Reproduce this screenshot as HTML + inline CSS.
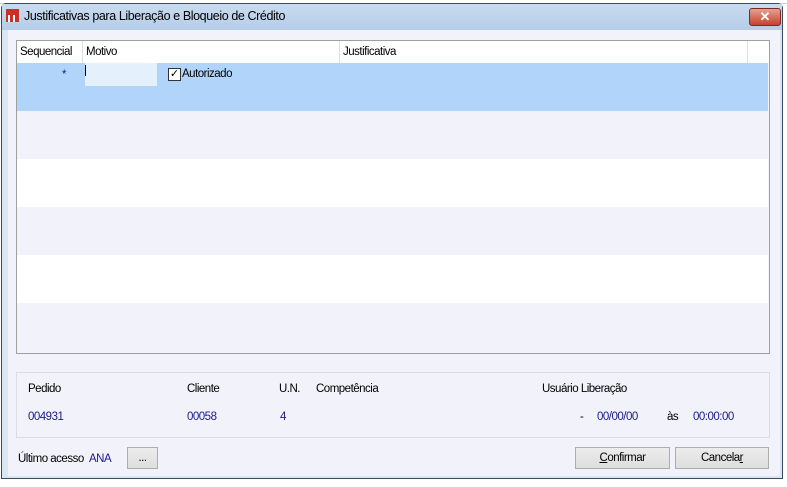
<!DOCTYPE html>
<html><head><style>
*{margin:0;padding:0;box-sizing:border-box}
body{width:787px;height:487px;overflow:hidden;background:#fff;font-family:"Liberation Sans",sans-serif;font-size:12px;color:#000;position:relative}
.abs{position:absolute}
#win{left:1px;top:3px;width:782px;height:476px;border:1px solid #3a4a5e;border-radius:5px 5px 0 0;background:#dbe6f4}
#title{left:2px;top:4px;width:780px;height:26px;background:linear-gradient(#c9dcf0,#b5cde8)}
#body{left:8px;top:30px;width:772px;height:446px;background:#f2f2fa}
.t{position:absolute;white-space:nowrap;font-size:11.5px;letter-spacing:-0.5px}
.b{color:#1a1a8c}
.btn{position:absolute;border:1px solid #adadad;background:linear-gradient(#ececec,#dedede);text-align:center;line-height:20px;font-size:11.5px;letter-spacing:-0.5px}
</style></head><body>
<div class="abs" style="left:0;top:0;width:787px;height:4px;background:#fff;border-bottom:1px solid #ccc"></div>
<div class="abs" id="win"></div>
<div class="abs" id="title"></div>
<div class="abs" style="left:6px;top:9px;width:13px;height:13px;background:#c8302a"></div>
<div class="abs" style="left:8px;top:15px;width:2px;height:7px;background:#fff"></div>
<div class="abs" style="left:13px;top:15px;width:2px;height:7px;background:#fff"></div>
<div class="t" style="left:24px;top:9px;font-size:12.5px;letter-spacing:-0.4px">Justificativas para Liberação e Bloqueio de Crédito</div>
<div class="abs" style="left:749px;top:8px;width:32px;height:18px;border:1px solid #7a2a20;border-radius:3px;background:linear-gradient(#e6a090,#c4432c);color:#fff;text-align:center;font-weight:bold;font-size:13px;line-height:16px">✕</div>
<div class="abs" id="body"></div>
<div class="abs" style="left:16px;top:40px;width:754px;height:314px;border:1px solid #a0a0a0;background:#f2f2fa"></div>
<div class="abs" style="left:17px;top:41px;width:752px;height:22px;background:#fff"></div>
<div class="abs" style="left:82px;top:41px;width:1px;height:22px;background:#e0e0e0"></div>
<div class="abs" style="left:339px;top:41px;width:1px;height:22px;background:#e0e0e0"></div>
<div class="abs" style="left:747px;top:41px;width:1px;height:22px;background:#e0e0e0"></div>
<div class="t" style="left:20px;top:46px">Sequencial</div>
<div class="t" style="left:86px;top:46px">Motivo</div>
<div class="t" style="left:343px;top:46px">Justificativa</div>
<div class="abs" style="left:17px;top:63px;width:751px;height:48px;background:#b1d5fa"></div>
<div class="abs" style="left:85px;top:63px;width:72px;height:23px;background:#e4f0fc"></div>
<div class="abs" style="left:85px;top:65px;width:1px;height:11px;background:#000"></div>
<div class="t" style="left:62px;top:69px;color:#1a1a8c">*</div>
<div class="abs" style="left:168px;top:68px;width:13px;height:13px;border:1px solid #333;background:#fff;font-size:11px;line-height:11px;text-align:center">✓</div>
<div class="t" style="left:182px;top:68px">Autorizado</div>
<div class="abs" style="left:17px;top:159px;width:751px;height:48px;background:#fff"></div>
<div class="abs" style="left:17px;top:255px;width:751px;height:48px;background:#fff"></div>
<div class="abs" style="left:16px;top:372px;width:754px;height:66px;border:1px solid #dcdce4"></div>
<div class="t" style="left:28px;top:383px">Pedido</div>
<div class="t" style="left:187px;top:383px">Cliente</div>
<div class="t" style="left:279px;top:383px">U.N.</div>
<div class="t" style="left:316px;top:383px">Competência</div>
<div class="t" style="left:542px;top:383px">Usuário Liberação</div>
<div class="t b" style="left:28px;top:411px">004931</div>
<div class="t b" style="left:187px;top:411px">00058</div>
<div class="t b" style="left:280px;top:411px">4</div>
<div class="t" style="left:580px;top:411px">-</div>
<div class="t b" style="left:597px;top:411px">00/00/00</div>
<div class="t" style="left:667px;top:411px">às</div>
<div class="t b" style="left:693px;top:411px">00:00:00</div>
<div class="t" style="left:18px;top:453px">Último acesso</div>
<div class="t b" style="left:89px;top:453px">ANA</div>
<div class="btn" style="left:127px;top:447px;width:31px;height:22px">...</div>
<div class="btn" style="left:575px;top:447px;width:95px;height:22px"><u>C</u>onfirmar</div>
<div class="btn" style="left:675px;top:447px;width:94px;height:22px">Cancela<u>r</u></div>
</body></html>
